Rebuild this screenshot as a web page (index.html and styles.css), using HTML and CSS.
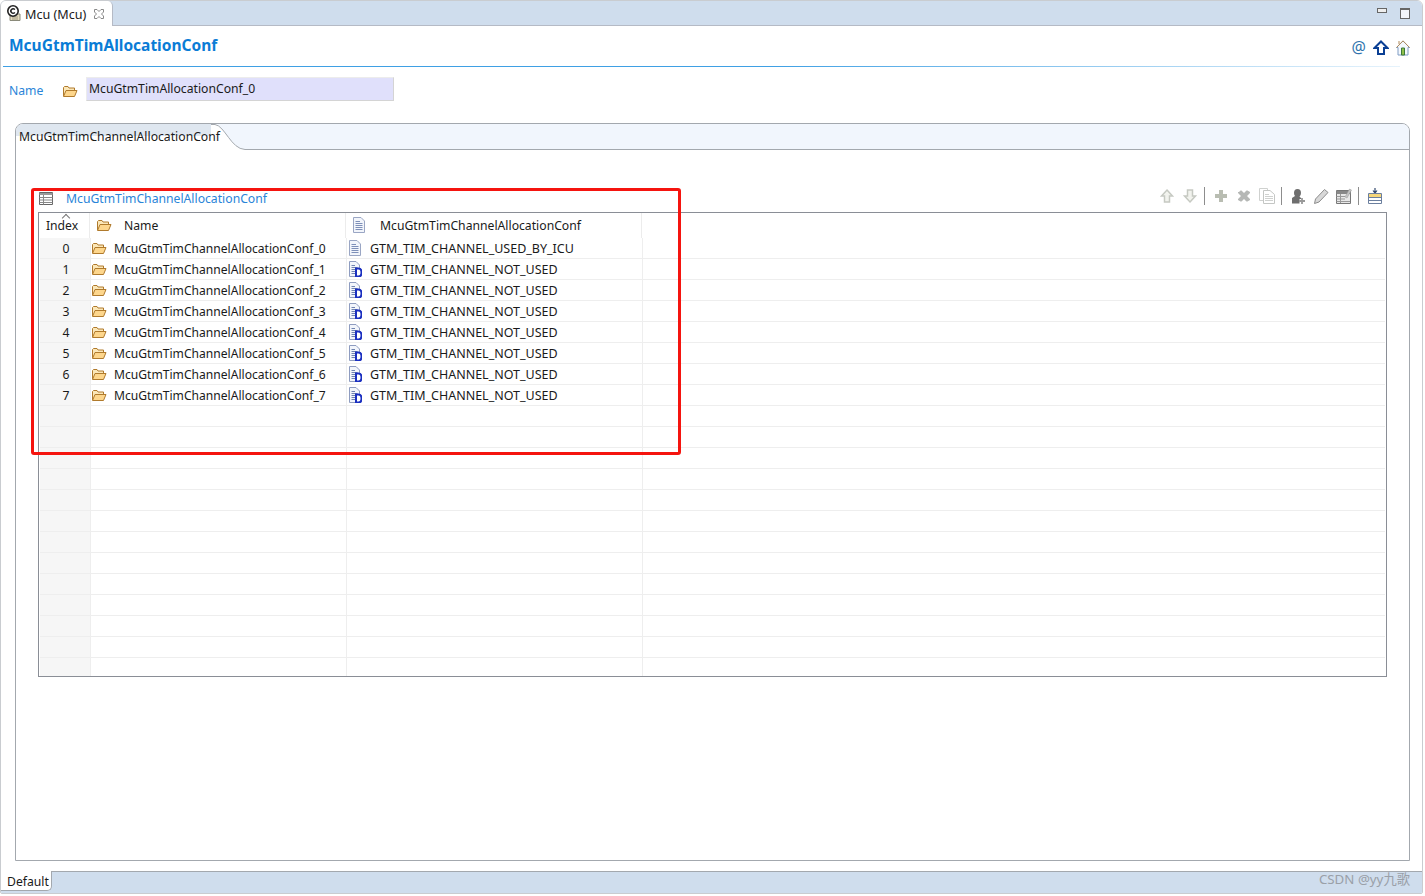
FILE: index.html
```html
<!DOCTYPE html>
<html lang="en">
<head>
    <meta charset="UTF-8">
    <title>Mcu (Mcu)</title>
    <link rel="stylesheet" href="styles.css">
</head>
<body>
    <svg class="defs" width="0" height="0">
        <symbol id="i-folder" viewBox="0 0 16 16">
            <path d="M1.5 13V4.5L2.5 3.5H6L7 5H12.5V7" fill="#fbe7b8" stroke="#b07a2c"/>
            <path d="M1.5 13.5L4 7.5H15L12.5 13.5Z" fill="#fdd68c" stroke="#b07a2c"/>
        </symbol>
        <symbol id="i-doc" viewBox="0 0 14 16">
            <path d="M1.5 .5H9L12.5 4V15.5H1.5Z" fill="#f2f5fb" stroke="#9aa6c4"/>
            <path d="M3.5 4.5H8M3.5 6.5H10.5M3.5 8.5H10.5M3.5 10.5H10.5M3.5 12.5H10.5" stroke="#7d8fb8"/>
        </symbol>
        <symbol id="i-doc-d" viewBox="0 0 14 16">
            <path d="M1.5 .5H8L11.5 4V15.5H1.5Z" fill="#f2f5fb" stroke="#8e9cc0"/>
            <path d="M3.5 4.5H7M3.5 6.5H9.5M3.5 8.5H7M3.5 10.5H7M3.5 12.5H7" stroke="#6f83b0"/>
            <path d="M8 7.5H10.5Q13.5 7.5 13.5 11.5T10.5 15.5H8Z" fill="#fff" stroke="#1a2fc0" stroke-width="2"/>
        </symbol>
    </svg>

    <div class="window">
        <div class="tabbar">
            <div class="tab">
                <svg class="tab-icon" width="16" height="16" viewBox="0 0 16 16">
                    <path d="M4 9H14V15.5H4Z" fill="#e6dcc0" stroke="#8a8a7a"/>
                    <path d="M6 12H12M6 14H12" stroke="#a09a80"/>
                    <circle cx="7" cy="6" r="5.2" fill="#fff" stroke="#222" stroke-width="1.6"/>
                    <path d="M9 4.5Q7 3 5.5 4.5T5.5 7.5Q7 9 9 7.5" fill="none" stroke="#222" stroke-width="1.5"/>
                </svg>
                <span>Mcu (Mcu)</span>
                <svg class="tab-close" width="10" height="10" viewBox="0 0 10 10">
                    <path d="M.5 .5H3L5 2.5L7 .5H9.5V3L7.5 5L9.5 7V9.5H7L5 7.5L3 9.5H.5V7L2.5 5L.5 3Z" fill="none" stroke="#8a8a8a"/>
                </svg>
            </div>
            <div class="win-buttons">
                <span class="btn-min"></span>
                <span class="btn-max"></span>
            </div>
        </div>

        <div class="title-row">
            <h1>McuGtmTimAllocationConf</h1>
            <div class="title-icons">
                <span class="at">@</span>
                <svg width="16" height="16" viewBox="0 0 16 16">
                    <path d="M8 1.5L14.5 8H11V14H5V8H1.5Z" fill="#fff" stroke="#0a3f94" stroke-width="2"/>
                </svg>
                <svg width="14" height="16" viewBox="0 0 14 16">
                    <path d="M7 1L13.5 7.5H12V15H2V7.5H.5Z" fill="#f4f8fd" stroke="#7f9cc4"/>
                    <path d="M7 .8L13.5 7.5M7 .8L.5 7.5M3 1V4" fill="none" stroke="#b08a5a"/>
                    <path d="M5.5 8H8.5V15H5.5Z" fill="#8fc04a" stroke="#3d7a3a"/>
                </svg>
            </div>
        </div>
        <div class="rule"></div>

        <div class="name-row">
            <label>Name</label>
            <svg class="icon-folder" width="16" height="16"><use href="#i-folder"/></svg>
            <div class="name-input">McuGtmTimAllocationConf_0</div>
        </div>

        <div class="folder">
            <div class="folder-head">
                <div class="folder-tab">McuGtmTimChannelAllocationConf</div>
                <svg class="tab-curve" width="36" height="26" viewBox="0 0 36 26">
                    <path d="M0 0H4C14 2 20 25 34 25H36V26H0Z" fill="#fff"/>
                    <path d="M0 .5H4C14 2 20 25 34 25.5H36" fill="none" stroke="#a3a8ae"/>
                </svg>
                <div class="head-rest"></div>
            </div>
            <div class="folder-body">
                <div class="section-head">
                    <svg class="section-icon" width="14" height="13" viewBox="0 0 14 13">
                        <path d="M.5 .5H13.5V12.5H.5Z" fill="#fff" stroke="#666"/>
                        <path d="M.5 1H13.5V3H.5Z" fill="#999"/>
                        <path d="M.5 5.5H13.5M.5 8H13.5M.5 10.5H13.5M4.5 3V12.5" stroke="#888"/>
                    </svg>
                    <span class="section-title">McuGtmTimChannelAllocationConf</span>
                    <div class="toolbar">
                        <svg class="tool" width="16" height="16" viewBox="0 0 16 16"><path d="M8 2L13.5 8H10.5V14H5.5V8H2.5Z" fill="#f2f3ee" stroke="#c6c9c2" stroke-width="1.5"/></svg>
                        <svg class="tool" width="16" height="16" viewBox="0 0 16 16"><path d="M8 14L13.5 8H10.5V2H5.5V8H2.5Z" fill="#f2f3ee" stroke="#c6c9c2" stroke-width="1.5"/></svg>
                        <span class="sep"></span>
                        <svg class="tool" width="16" height="16" viewBox="0 0 16 16"><path d="M6 2H10V6H14V10H10V14H6V10H2V6H6Z" fill="#b9bdb2"/></svg>
                        <svg class="tool" width="16" height="16" viewBox="0 0 16 16"><path d="M3 4L4.5 2.5H5.5L8 5L10.5 2.5H11.5L14 4V5L11 8L14 11V12L11.5 13.5H10.5L8 11L5.5 13.5H4.5L2 12V11L5 8L2 5V4Z" fill="#b5b7b5"/></svg>
                        <svg class="tool" width="16" height="16" viewBox="0 0 16 16"><path d="M.5 .5H8.5V12.5H.5Z" fill="#fff" stroke="#cfd1cf"/><path d="M4.5 2.5H11L15.5 6.5V15.5H4.5Z" fill="#fff" stroke="#c4c6c4"/><path d="M6 6.5H10M6 8.5H14M6 10.5H14M6 12.5H14" stroke="#cfd1cf"/></svg>
                        <span class="sep"></span>
                        <svg class="tool" width="16" height="16" viewBox="0 0 16 16"><path d="M4 5Q4 1 7.5 1T11 5Q11 7 9.5 8.5L11 10V11H9.5V15.5H2V10L5 8Q4 7 4 5Z" fill="#6e6e6e"/><path d="M12 10V16M9 13H15" stroke="#999" stroke-width="1.8"/></svg>
                        <svg class="tool" width="16" height="16" viewBox="0 0 16 16"><path d="M1.5 15.5L2.5 11L11.5 1.5L15 4.5L6 14Z" fill="#d8d8d8" stroke="#8c8c8c"/></svg>
                        <svg class="tool" width="16" height="16" viewBox="0 0 16 16"><path d="M.5 2.5H14.5V15.5H.5Z" fill="#e8e8e8" stroke="#777"/><path d="M.5 3H14.5V6H.5Z" fill="#888"/><path d="M.5 8.5H9M.5 11H9M.5 13.5H14M4.5 6V15" stroke="#999"/><path d="M9 9L13.5 1L15.5 2L11 10Z" fill="#c4c4c4" stroke="#999" stroke-width=".5"/></svg>
                        <span class="sep"></span>
                        <svg class="tool" width="16" height="16" viewBox="0 0 16 16"><path d="M8 0V4M6 2.5L8 5L10 2.5" fill="none" stroke="#33486e" stroke-width="1.2"/><path d="M1.5 5.5H14.5V15.5H1.5Z" fill="#fff" stroke="#6b7f9e"/><path d="M2 6H14V9H2Z" fill="#f6d67a"/><path d="M1.5 9.5H14.5M1.5 12.5H14.5" stroke="#6b7f9e"/></svg>
                    </div>
                </div>

                <div class="table">
                    <div class="table-header">
                        <div class="th th-index"><span class="sort"></span>Index</div>
                        <div class="th th-name"><svg width="16" height="16"><use href="#i-folder"/></svg>Name</div>
                        <div class="th th-value"><svg width="14" height="16"><use href="#i-doc"/></svg>McuGtmTimChannelAllocationConf</div>
                        <div class="th th-rest"></div>
                    </div>
                    <div class="row">
                        <div class="cell index">0</div>
                        <div class="cell name"><svg width="16" height="16"><use href="#i-folder"/></svg>McuGtmTimChannelAllocationConf_0</div>
                        <div class="cell value"><svg width="14" height="16"><use href="#i-doc"/></svg>GTM_TIM_CHANNEL_USED_BY_ICU</div>
                        <div class="cell"></div>
                    </div>
                    <div class="row">
                        <div class="cell index">1</div>
                        <div class="cell name"><svg width="16" height="16"><use href="#i-folder"/></svg>McuGtmTimChannelAllocationConf_1</div>
                        <div class="cell value"><svg width="14" height="16"><use href="#i-doc-d"/></svg>GTM_TIM_CHANNEL_NOT_USED</div>
                        <div class="cell"></div>
                    </div>
                    <div class="row">
                        <div class="cell index">2</div>
                        <div class="cell name"><svg width="16" height="16"><use href="#i-folder"/></svg>McuGtmTimChannelAllocationConf_2</div>
                        <div class="cell value"><svg width="14" height="16"><use href="#i-doc-d"/></svg>GTM_TIM_CHANNEL_NOT_USED</div>
                        <div class="cell"></div>
                    </div>
                    <div class="row">
                        <div class="cell index">3</div>
                        <div class="cell name"><svg width="16" height="16"><use href="#i-folder"/></svg>McuGtmTimChannelAllocationConf_3</div>
                        <div class="cell value"><svg width="14" height="16"><use href="#i-doc-d"/></svg>GTM_TIM_CHANNEL_NOT_USED</div>
                        <div class="cell"></div>
                    </div>
                    <div class="row">
                        <div class="cell index">4</div>
                        <div class="cell name"><svg width="16" height="16"><use href="#i-folder"/></svg>McuGtmTimChannelAllocationConf_4</div>
                        <div class="cell value"><svg width="14" height="16"><use href="#i-doc-d"/></svg>GTM_TIM_CHANNEL_NOT_USED</div>
                        <div class="cell"></div>
                    </div>
                    <div class="row">
                        <div class="cell index">5</div>
                        <div class="cell name"><svg width="16" height="16"><use href="#i-folder"/></svg>McuGtmTimChannelAllocationConf_5</div>
                        <div class="cell value"><svg width="14" height="16"><use href="#i-doc-d"/></svg>GTM_TIM_CHANNEL_NOT_USED</div>
                        <div class="cell"></div>
                    </div>
                    <div class="row">
                        <div class="cell index">6</div>
                        <div class="cell name"><svg width="16" height="16"><use href="#i-folder"/></svg>McuGtmTimChannelAllocationConf_6</div>
                        <div class="cell value"><svg width="14" height="16"><use href="#i-doc-d"/></svg>GTM_TIM_CHANNEL_NOT_USED</div>
                        <div class="cell"></div>
                    </div>
                    <div class="row">
                        <div class="cell index">7</div>
                        <div class="cell name"><svg width="16" height="16"><use href="#i-folder"/></svg>McuGtmTimChannelAllocationConf_7</div>
                        <div class="cell value"><svg width="14" height="16"><use href="#i-doc-d"/></svg>GTM_TIM_CHANNEL_NOT_USED</div>
                        <div class="cell"></div>
                    </div>
                    <!-- empty rows -->
                    <div class="row"><div class="cell index"></div><div class="cell"></div><div class="cell"></div><div class="cell"></div></div>
                    <div class="row"><div class="cell index"></div><div class="cell"></div><div class="cell"></div><div class="cell"></div></div>
                    <div class="row"><div class="cell index"></div><div class="cell"></div><div class="cell"></div><div class="cell"></div></div>
                    <div class="row"><div class="cell index"></div><div class="cell"></div><div class="cell"></div><div class="cell"></div></div>
                    <div class="row"><div class="cell index"></div><div class="cell"></div><div class="cell"></div><div class="cell"></div></div>
                    <div class="row"><div class="cell index"></div><div class="cell"></div><div class="cell"></div><div class="cell"></div></div>
                    <div class="row"><div class="cell index"></div><div class="cell"></div><div class="cell"></div><div class="cell"></div></div>
                    <div class="row"><div class="cell index"></div><div class="cell"></div><div class="cell"></div><div class="cell"></div></div>
                    <div class="row"><div class="cell index"></div><div class="cell"></div><div class="cell"></div><div class="cell"></div></div>
                    <div class="row"><div class="cell index"></div><div class="cell"></div><div class="cell"></div><div class="cell"></div></div>
                    <div class="row"><div class="cell index"></div><div class="cell"></div><div class="cell"></div><div class="cell"></div></div>
                    <div class="row"><div class="cell index"></div><div class="cell"></div><div class="cell"></div><div class="cell"></div></div>
                    <div class="row"><div class="cell index"></div><div class="cell"></div><div class="cell"></div><div class="cell"></div></div>
                </div>
            </div>
        </div>

        <div class="bottom-bar">
            <div class="bottom-tab">Default</div>
            <div class="watermark">CSDN @yy九歌</div>
        </div>
    </div>

    <!-- red annotation drawn on top of the screenshot -->
    <div class="highlight"></div>
</body>
</html>
```

FILE: styles.css
```css
* {
    box-sizing: border-box;
}
body {
    margin: 0;
    height: 896px;
    overflow: hidden;
    background-color: #fff;
    color: #1a1a1a;
    font-family: "Noto Sans", "Noto Sans CJK SC", sans-serif;
    font-size: 12.2px;
}
.defs {
    position: absolute;
}
svg {
    flex: none;
    display: block;
}
.window {
    display: flex;
    flex-direction: column;
    width: 1423px;
    height: 894px;
    border: 1px solid #c9ccd0;
    border-radius: 6px 6px 2px 2px;
    overflow: hidden;
}

/* Editor tab strip */
.tabbar {
    display: flex;
    justify-content: space-between;
    height: 25px;
    background-color: #cfdded;
    border-bottom: 1px solid #b5bac5;
}
.tab {
    display: flex;
    align-items: center;
    width: 112px;
    height: 25px;
    padding: 1px 0 0 5px;
    font-size: 12.6px;
    background-color: #fff;
    border-right: 1px solid #b5bac5;
    border-radius: 0 5px 0 0;
}
.tab-icon {
    margin: -2px 3px 0 0;
}
.tab-close {
    margin-left: 8px;
}
.win-buttons {
    display: flex;
    align-items: flex-start;
    gap: 13px;
    padding: 7px 12px 0 0;
}
.btn-min {
    width: 10px;
    height: 5px;
    border: 1px solid #666;
    background-color: #eee;
}
.btn-max {
    width: 10px;
    height: 11px;
    border: 1px solid #666;
    border-top-width: 2px;
    background-color: #f2f5fa;
}

/* Title */
.title-row {
    display: flex;
    justify-content: space-between;
    align-items: center;
    height: 40px;
    padding: 0 12px 0 8px;
}
h1 {
    margin: 0 0 3px;
    font-size: 15.5px;
    font-weight: 700;
    color: #0a7cd6;
}
.title-icons {
    display: flex;
    align-items: center;
    gap: 7px;
    margin-top: 3px;
}
.at {
    font-size: 16px;
    line-height: 16px;
    margin-top: -2px;
    color: #2f74ad;
}
.rule {
    height: 1px;
    margin: 0 22px 0 2px;
    background: linear-gradient(to right, #3fa0e4, #3fa0e4 55%, #e6f3fc);
}

/* Name field */
.name-row {
    display: flex;
    align-items: center;
    height: 24px;
    margin-top: 10px;
    padding-left: 8px;
}
.name-row label {
    width: 53px;
    padding-top: 2px;
    color: #2a84d8;
}
.icon-folder {
    margin-top: 3px;
}
.name-input {
    width: 308px;
    height: 24px;
    margin-left: 8px;
    padding-left: 2px;
    line-height: 22px;
    background-color: #e0e0fb;
    border: 1px solid #ececec;
    border-bottom-color: #d4d4d4;
    border-right-color: #d4d4d4;
}

/* Tab folder */
.folder {
    flex: 1;
    display: flex;
    flex-direction: column;
    margin: 22px 12px 0 14px;
    border: 1px solid #a3a8ae;
    border-radius: 8px 8px 0 0;
    overflow: hidden;
}
.folder-head {
    display: flex;
    height: 26px;
}
.folder-tab {
    z-index: 1;
    width: 195px;
    padding-left: 3px;
    line-height: 25px;
    white-space: nowrap;
    background: linear-gradient(to bottom, #dfe7f0, #dfe7f0 45%, #fff 45%);
}
.head-rest {
    flex: 1;
    background-color: #f1f6fd;
    border-bottom: 1px solid #a3a8ae;
}
.tab-curve {
    background-color: #f1f6fd;
}
.folder-body {
    flex: 1;
    padding: 37px 22px 0 22px;
}

/* Section header and toolbar */
.section-head {
    display: flex;
    align-items: center;
    height: 25px;
    padding: 0 1px 3px 1px;
}
.section-icon {
    margin-right: 13px;
}
.section-title {
    color: #2a84d8;
}
.toolbar {
    display: flex;
    align-items: center;
    margin-left: auto;
    margin-bottom: 4px;
}
.tool {
    margin: 0 3.5px;
}
.sep {
    width: 1px;
    height: 18px;
    margin: 0 4.5px 0 2.5px;
    background-color: #8d8d8d;
}

/* Table */
.table {
    height: 465px;
    padding-left: 1px;
    overflow: hidden;
    border: 1px solid #8a8e96;
}
.table-header {
    display: grid;
    grid-template-columns: 50px 256px 296px 1fr;
    height: 25px;
}
.th {
    position: relative;
    display: flex;
    align-items: center;
    padding-bottom: 1px;
    border-right: 1px solid #ececec;
}
.th-index {
    justify-content: center;
    padding-right: 5px;
}
.th-name {
    padding-left: 6px;
    gap: 12px;
}
.th-value {
    padding-left: 6px;
    gap: 14px;
}
.th-rest {
    border-right: 0;
}
.sort {
    position: absolute;
    top: 2px;
    left: 23px;
    width: 6px;
    height: 6px;
    border-left: 1px solid #777;
    border-top: 1px solid #777;
    transform: rotate(45deg);
}
.row {
    display: grid;
    grid-template-columns: 51px 256px 296px 1fr;
    height: 21px;
    margin-right: 1px;
    border-bottom: 1px solid #eeeeee;
}
.cell {
    display: flex;
    align-items: center;
    border-right: 1px solid #eeeeee;
}
.cell:last-child {
    border-right: 0;
}
.index {
    justify-content: center;
    padding-left: 2px;
    background-color: #f6f6f6;
}
.name {
    gap: 7px;
    font-size: 12.1px;
}
.value {
    gap: 8px;
    padding-left: 1px;
    font-size: 12.5px;
}

/* Bottom page tabs */
.bottom-bar {
    display: flex;
    justify-content: space-between;
    height: 22px;
    margin-top: 10px;
    background-color: #cfdded;
    border-top: 1px solid #a3a8ae;
}
.bottom-tab {
    width: 51px;
    height: 20px;
    margin-top: -1px;
    padding-left: 6px;
    line-height: 22px;
    background-color: #fff;
    border-right: 1px solid #a3a8ae;
    border-bottom: 1px solid #a3a8ae;
    border-radius: 0 0 5px 0;
}
.watermark {
    padding: 1px 12px 0 0;
    font-size: 13.3px;
    line-height: 13px;
    color: #9aa0a8;
}

/* Red annotation */
.highlight {
    position: absolute;
    left: 31px;
    top: 188px;
    width: 650px;
    height: 267px;
    border: 3px solid #f5140f;
    border-radius: 3px;
}
```
